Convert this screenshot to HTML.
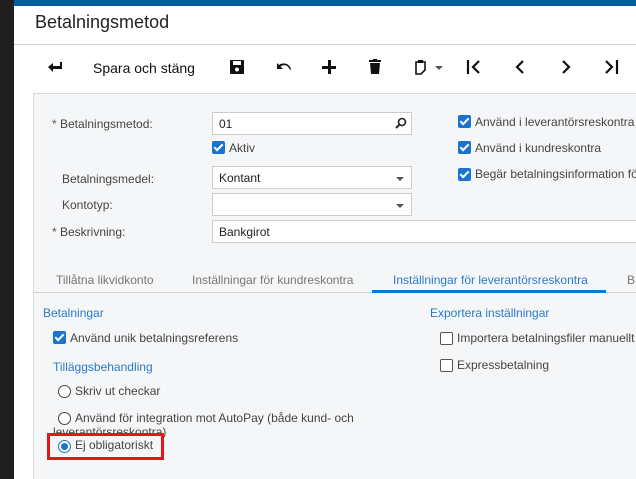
<!DOCTYPE html>
<html style="width:636px;height:479px;overflow:hidden"><head><meta charset="utf-8"><style>
*{margin:0;padding:0;box-sizing:border-box}
body{width:636px;height:479px;overflow:hidden;background:#fff;font-family:"Liberation Sans",sans-serif;position:relative;color:#333}
.a{position:absolute}
.inp{position:absolute;background:#fff;border:1px solid #ccc;font-size:12px;color:#222;padding:4px 6px;height:23px}
.cb{position:absolute;width:13px;height:13px;border-radius:2px;background:#1a73d0}
.cb:after{content:"";position:absolute;left:4px;top:1px;width:3px;height:7px;border:solid #fff;border-width:0 2px 2px 0;transform:rotate(45deg)}
.ucb{position:absolute;width:13px;height:13px;border-radius:2px;border:1px solid #555;background:#fff}
.rad{position:absolute;width:13px;height:13px;border-radius:50%;border:1px solid #444;background:#fff}
.t{position:absolute;font-size:12px;color:#444;white-space:nowrap}
.arr{position:absolute;width:0;height:0;border-left:4px solid transparent;border-right:4px solid transparent;border-top:4px solid #555}
</style></head><body>
<div class="a" style="left:0;top:0;width:14px;height:479px;background:#1e1e1e"></div>
<div class="a" style="left:14px;top:0;width:622px;height:6px;background:#00609c"></div>
<div class="a" style="left:14px;top:44px;width:622px;height:1px;background:#d4d4d4"></div>
<div class="a" style="left:35px;top:12px;font-size:18px;color:#222">Betalningsmetod</div>
<svg class="a" style="left:47px;top:61px" width="18" height="12" viewBox="0 0 18 12"><path d="M1 6 L6 2 L6 5 L13 5 L13 1 L15 1 L15 8 L6 8 L6 11 Z" fill="#111"/></svg>
<div class="a" style="left:93px;top:60px;font-size:14px;color:#111">Spara och stäng</div>
<svg class="a" style="left:230px;top:60px" width="14" height="14" viewBox="0 0 14 14"><rect x="0" y="0" width="14" height="14" rx="1" fill="#111"/><rect x="3" y="1" width="8" height="4" fill="#fff"/><circle cx="7" cy="9.5" r="2" fill="#fff"/></svg>
<svg class="a" style="left:276px;top:61px" width="16" height="12" viewBox="0 0 16 12"><path d="M1 2 L1 8 L7 8 L4.5 5.5 C8 3 12 4 14 9 L15 8 C13 2 7 1 3 4 Z" fill="#111"/></svg>
<div class="a" style="left:322px;top:66px;width:14px;height:3px;background:#111"></div>
<div class="a" style="left:327.5px;top:60px;width:3px;height:14px;background:#111"></div>
<svg class="a" style="left:368px;top:59px" width="14" height="16" viewBox="0 0 14 16"><rect x="1" y="1" width="12" height="2" fill="#111"/><rect x="5" y="0" width="4" height="2" fill="#111"/><path d="M2 4 L12 4 L11 15 L3 15 Z" fill="#111"/></svg>
<svg class="a" style="left:414px;top:59px" width="14" height="16" viewBox="0 0 14 16"><path d="M2 3 L11 3 L11 11 L7 15 L2 15 Z" fill="none" stroke="#111" stroke-width="1.6"/><rect x="4" y="1" width="5" height="3" fill="#111"/></svg>
<div class="arr" style="left:435px;top:66px"></div>
<svg class="a" style="left:466px;top:59px" width="60" height="16" viewBox="0 0 60 16"><path d="M2 1 L2 15" stroke="#111" stroke-width="2.2"/><path d="M13 2 L7 8 L13 14" fill="none" stroke="#111" stroke-width="2.2"/><path d="M57 2 L51 8 L57 14" fill="none" stroke="#111" stroke-width="2.2"/></svg>
<svg class="a" style="left:560px;top:59px" width="66" height="16" viewBox="0 0 66 16"><path d="M3 2 L9 8 L3 14" fill="none" stroke="#111" stroke-width="2.2"/><path d="M46 2 L52 8 L46 14" fill="none" stroke="#111" stroke-width="2.2"/><path d="M57 1 L57 15" stroke="#111" stroke-width="2.2"/></svg>
<div class="a" style="left:33px;top:93px;width:610px;height:386px;background:#f5f6f8;border:1px solid #dcdcdc;border-bottom:none"></div>
<div class="t" style="left:52px;top:117px"><span style="color:#555">*</span> Betalningsmetod:</div>
<div class="inp" style="left:212px;top:112px;width:200px">01</div>
<svg class="a" style="left:395px;top:117px" width="12" height="12" viewBox="0 0 12 12"><circle cx="7" cy="5" r="3.5" fill="none" stroke="#222" stroke-width="1.6"/><path d="M4.5 7.5 L1 11" stroke="#222" stroke-width="2"/></svg>
<div class="cb" style="left:212px;top:141px"></div><div class="t" style="left:229px;top:141px">Aktiv</div>
<div class="t" style="left:62px;top:172px">Betalningsmedel:</div>
<div class="inp" style="left:212px;top:166px;width:200px">Kontant</div><div class="arr" style="left:396px;top:177px"></div>
<div class="t" style="left:62px;top:198px">Kontotyp:</div>
<div class="inp" style="left:212px;top:193px;width:200px"></div><div class="arr" style="left:396px;top:204px"></div>
<div class="t" style="left:52px;top:225px"><span style="color:#555">*</span> Beskrivning:</div>
<div class="inp" style="left:212px;top:220px;width:430px">Bankgirot</div>
<div class="cb" style="left:458px;top:115px"></div><div class="t" style="left:475px;top:115px">Använd i leverantörsreskontra</div>
<div class="cb" style="left:458px;top:141px"></div><div class="t" style="left:475px;top:141px">Använd i kundreskontra</div>
<div class="cb" style="left:458px;top:168px"></div><div class="t" style="left:475px;top:167px">Begär betalningsinformation för</div>
<div class="t" style="left:56px;top:273px;color:#777">Tillåtna likvidkonto</div>
<div class="t" style="left:192px;top:273px;color:#777">Inställningar för kundreskontra</div>
<div class="t" style="left:393px;top:273px;color:#2a7ac9">Inställningar för leverantörsreskontra</div>
<div class="t" style="left:627px;top:273px;color:#777">B</div>
<div class="a" style="left:34px;top:292px;width:602px;height:1px;background:#d4d4d4"></div>
<div class="a" style="left:372px;top:290px;width:234px;height:3px;background:#0a7bd0"></div>
<div class="t" style="left:43px;top:306px;color:#2a7ac9">Betalningar</div>
<div class="cb" style="left:53px;top:331px"></div><div class="t" style="left:70px;top:331px">Använd unik betalningsreferens</div>
<div class="t" style="left:53px;top:360px;color:#2a7ac9">Tilläggsbehandling</div>
<div class="rad" style="left:58px;top:385px"></div><div class="t" style="left:75px;top:384px">Skriv ut checkar</div>
<div class="rad" style="left:58px;top:412px"></div><div class="t" style="left:75px;top:411px">Använd för integration mot AutoPay (både kund- och</div>
<div class="t" style="left:53px;top:425px">leverantörsreskontra)</div>
<div class="a" style="left:47px;top:433px;width:117px;height:27px;border:3px solid #e8141b"></div>
<div class="rad" style="left:58px;top:440px;border-color:#1a73d0"></div><div class="a" style="left:61px;top:443px;width:7px;height:7px;border-radius:50%;background:#1a73d0"></div>
<div class="t" style="left:75px;top:438px">Ej obligatoriskt</div>
<div class="t" style="left:430px;top:306px;color:#2a7ac9">Exportera inställningar</div>
<div class="ucb" style="left:440px;top:332px"></div><div class="t" style="left:457px;top:331px">Importera betalningsfiler manuellt</div>
<div class="ucb" style="left:440px;top:359px"></div><div class="t" style="left:457px;top:358px">Expressbetalning</div>
</body></html>
